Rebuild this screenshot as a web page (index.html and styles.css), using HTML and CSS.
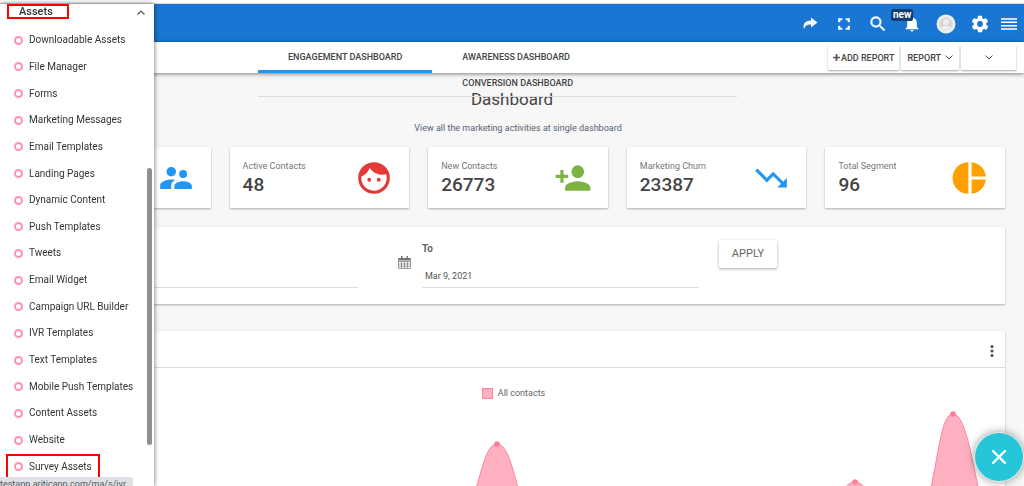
FILE: index.html
```html
<!DOCTYPE html>
<html lang="en">
<head>
<meta charset="utf-8">
<title>Dashboard</title>
<link rel="stylesheet" href="styles.css">
</head>
<body>
<header class="topbar">
  <button class="icon-btn" aria-label="Share"><svg width="16" height="16" viewBox="0 0 16 16"><path d="M9 1.500L15.500 6.500 9 11.500V8.600C5.500 8.300 3 9.500 2.200 13 .2 8.500 3 4.500 9 4.500z" fill="#fff"/></svg></button>
  <button class="icon-btn" aria-label="Full screen"><svg width="20" height="20" viewBox="0 0 24 24"><path d="M5 5h5v2.500H7.500V10H5zm9 0h5v5h-2.500V7.500H14zM5 14h2.500v2.500H10V19H5zm11.500 0H19v5h-5v-2.500h2.500z" fill="#fff"/></svg></button>
  <button class="icon-btn" aria-label="Search"><svg width="20" height="20" viewBox="0 0 24 24"><path d="M15.500 14h-.8l-.3-.3A6.500 6.500 0 1 0 13.700 14.400l.3.300v.8l5 5 1.500-1.500zm-6 0a4.500 4.500 0 1 1 0-9 4.500 4.500 0 0 1 0 9z" fill="#fff" stroke="#fff" stroke-width=".5"/></svg></button>
  <button class="icon-btn bell" aria-label="Notifications"><svg width="18" height="18" viewBox="0 0 24 24"><path d="M12 22c1.100 0 2-.9 2-2h-4c0 1.100.9 2 2 2zm6.500-6v-5.500c0-3.300-2.100-6-5-6.700V3a1.500 1.500 0 0 0-3 0v.8c-2.900.7-5 3.400-5 6.700V16l-2 2v1h17v-1z" fill="#fff"/></svg><span class="badge">new</span></button>
  <button class="icon-btn" aria-label="Profile"><svg width="20" height="20" viewBox="0 0 20 20"><circle cx="10" cy="10" r="9.500" fill="#eee"/><circle cx="10" cy="10" r="6.500" fill="#d6d6d6"/><circle cx="10" cy="8" r="3" fill="#eee"/><path d="M5 14c1-3 9-3 10 0-2 3-8 3-10 0z" fill="#eee"/></svg></button>
  <button class="icon-btn" aria-label="Settings"><svg width="20" height="20" viewBox="0 0 24 24"><path d="M19.400 13c0-.3.100-.6.100-1s0-.7-.1-1l2.100-1.600c.2-.2.200-.4.100-.6l-2-3.500c-.1-.2-.4-.3-.6-.2l-2.500 1c-.5-.4-1.100-.7-1.700-1l-.4-2.600c0-.3-.2-.5-.4-.5h-4c-.2 0-.4.200-.5.400l-.4 2.700c-.6.200-1.100.6-1.700 1l-2.500-1c-.2-.1-.5 0-.6.200l-2 3.500c-.1.200 0 .5.100.6L4.600 11c0 .3-.1.600-.1 1s0 .7.100 1l-2.100 1.600c-.2.200-.2.400-.1.600l2 3.500c.1.200.4.300.6.200l2.500-1c.5.400 1.100.7 1.700 1l.4 2.600c0 .3.200.5.500.5h4c.2 0 .4-.2.500-.4l.4-2.700c.6-.2 1.100-.6 1.700-1l2.500 1c.2.100.5 0 .6-.2l2-3.500c.1-.2 0-.5-.1-.6zM12 15.500a3.500 3.500 0 1 1 0-7 3.500 3.500 0 0 1 0 7z" fill="#fff"/></svg></button>
  <button class="icon-btn" aria-label="Menu"><svg width="16" height="12" viewBox="0 0 16 12"><path d="M0 1h16M0 4.300h16M0 7.700h16M0 11h16" stroke="#fff" stroke-width="1.400"/></svg></button>
</header>

<div class="subbar">
  <nav class="tabs">
    <a class="tab active" href="#engagement">ENGAGEMENT DASHBOARD</a>
    <a class="tab" href="#awareness">AWARENESS DASHBOARD</a>
    <a class="tab wrapped" href="#conversion">CONVERSION DASHBOARD</a>
  </nav>
  <div class="actions">
    <button class="action"><svg width="7" height="7" viewBox="0 0 7 7"><path d="M3.500 0v7M0 3.500h7" stroke="#555" stroke-width="1.700"/></svg>ADD REPORT</button>
    <button class="action report">REPORT<svg width="8" height="5" viewBox="0 0 8 5"><path d="M.5.500L4 4 7.500.500" fill="none" stroke="#555"/></svg></button>
    <button class="action more" aria-label="More"><svg width="8" height="5" viewBox="0 0 8 5"><path d="M.5.500L4 4 7.500.500" fill="none" stroke="#555"/></svg></button>
  </div>
</div>

<main class="content">
  <h1 class="title">Dashboard</h1>
  <p class="subtitle">View all the marketing activities at single dashboard</p>

  <section class="stats">
    <article class="card stat">
      <div></div>
      <svg width="38" height="38" viewBox="0 0 24 24"><path d="M16.500 12a2.500 2.500 0 1 0 0-5 2.500 2.500 0 0 0 0 5zM9 11a3 3 0 1 0 0-6 3 3 0 0 0 0 6zm7.500 3c-1.800 0-5.500.9-5.500 2.800V19h11v-2.200c0-1.900-3.700-2.800-5.500-2.800zM9 13c-2.300 0-7 1.200-7 3.500V19h7v-2.200c0-.9.300-2.400 2.400-3.500-.9-.2-1.700-.3-2.400-.3z" fill="#2196f3"/></svg>
    </article>
    <article class="card stat">
      <div><h2 class="label">Active Contacts</h2><p class="value">48</p></div>
      <svg width="38" height="38" viewBox="0 0 24 24"><path d="M9 11.800a1.200 1.200 0 1 0 0 2.500 1.200 1.200 0 0 0 0-2.500zm6 0a1.200 1.200 0 1 0 0 2.500 1.200 1.200 0 0 0 0-2.500zM12 2a10 10 0 1 0 0 20 10 10 0 0 0 0-20zm0 18a8 8 0 0 1-8-8.900 10.100 10.100 0 0 0 5.300-5.400A10 10 0 0 0 17.500 10c.8 0 1.500-.1 2.200-.3.200.7.300 1.500.3 2.300a8 8 0 0 1-8 8z" fill="#e53935"/></svg>
    </article>
    <article class="card stat">
      <div><h2 class="label">New Contacts</h2><p class="value">26773</p></div>
      <svg width="38" height="38" viewBox="0 0 24 24"><path d="M15 12a4 4 0 1 0 0-8 4 4 0 0 0 0 8zm-9-2V7H4v3H1v2h3v3h2v-3h3v-2zm9 4c-2.700 0-8 1.300-8 4v2h16v-2c0-2.700-5.300-4-8-4z" fill="#7cb342"/></svg>
    </article>
    <article class="card stat">
      <div><h2 class="label">Marketing Churn</h2><p class="value">23387</p></div>
      <svg width="38" height="38" viewBox="0 0 24 24"><path d="M16 18l2.300-2.300-4.900-4.900-4 4L2 7.400 3.400 6l6 6 4-4 6.300 6.300L22 12v6z" fill="#2196f3"/></svg>
    </article>
    <article class="card stat">
      <div><h2 class="label">Total Segment</h2><p class="value">96</p></div>
      <svg width="38" height="38" viewBox="0 0 24 24"><path d="M11 2v20a10 10 0 0 1 0-20zm2 0v9h9a10 10 0 0 0-9-9zm0 11v9a10 10 0 0 0 9-9z" fill="#ffa000"/></svg>
    </article>
  </section>

  <form class="card filter">
    <div class="date"></div>
    <svg class="calendar" width="13" height="13" viewBox="0 0 13 13"><path d="M.5 2.500h12v10H.5zM.5 5.500h12M3.500 5.500v7M6.500 5.500v7M9.500 5.500v7M.5 8h12M.5 10.300h12" fill="none" stroke="#777" stroke-width=".7"/><path d="M.5 2h12v2.500H.5zM3 0h1.500v3H3zM8.500 0H10v3H8.500z" fill="#777"/></svg>
    <div class="date"><label for="to">To</label><input id="to" type="text" value="Mar 9, 2021"></div>
    <button class="apply" type="button">APPLY</button>
  </form>

  <section class="card chart">
    <div class="chart-head"><button class="dots" aria-label="Chart options"><svg width="4" height="14" viewBox="0 0 4 14"><g fill="#555"><circle cx="2" cy="2.500" r="1.600"/><circle cx="2" cy="7" r="1.600"/><circle cx="2" cy="11.500" r="1.600"/></g></svg></button></div>
    <p class="legend"><span class="swatch"></span>All contacts</p>
    <svg class="plot" viewBox="0 0 974 90" role="img" aria-label="All contacts">
      <g fill="#ffb1c1" stroke="#ff84a0">
        <path d="M443 96C452 65 456 44 466 44S482 68 489 96z"/>
        <path d="M808 96C813 88 818 82 824 82S835 88 840 96z"/>
        <path d="M898 96C908 55 910 14 922 14S940 55 949 96z"/>
      </g>
      <g fill="#ff7f9b"><circle cx="466" cy="44" r="2.800"/><circle cx="824" cy="82" r="2.800"/><circle cx="922" cy="14" r="2.800"/></g>
    </svg>
  </section>
</main>

<aside class="drawer">
  <button class="group"><span class="group-name">Assets</span><svg width="8" height="5" viewBox="0 0 8 5"><path d="M.5 4.500L4 1l3.500 3.500" fill="none" stroke="#555" stroke-width="1.200"/></svg></button>
  <ul class="menu">
    <li><a href="#">Downloadable Assets</a></li>
    <li><a href="#">File Manager</a></li>
    <li><a href="#">Forms</a></li>
    <li><a href="#">Marketing Messages</a></li>
    <li><a href="#">Email Templates</a></li>
    <li><a href="#">Landing Pages</a></li>
    <li><a href="#">Dynamic Content</a></li>
    <li><a href="#">Push Templates</a></li>
    <li><a href="#">Tweets</a></li>
    <li><a href="#">Email Widget</a></li>
    <li><a href="#">Campaign URL Builder</a></li>
    <li><a href="#">IVR Templates</a></li>
    <li><a href="#">Text Templates</a></li>
    <li><a href="#">Mobile Push Templates</a></li>
    <li><a href="#">Content Assets</a></li>
    <li><a href="#">Website</a></li>
    <li><a class="marked" href="#">Survey Assets</a></li>
  </ul>
  <div class="thumb"></div>
</aside>
<div class="status">testapp.ariticapp.com/ma/s/ivr</div>
<button class="fab" aria-label="Close"><svg width="16" height="16" viewBox="0 0 16 16"><path d="M2 2l12 12M14 2L2 14" stroke="#fff" stroke-width="2.400" stroke-linecap="round"/></svg></button>
</body>
</html>
```
FILE: styles.css
```css
*, *::before { box-sizing: border-box; }
html { height: 100%; overflow: hidden; }
body {
  height: 100%; margin: 0; overflow: hidden;
  display: flex; flex-direction: column;
  border-top: 3px solid #fff;
  background: #f7f7f7; color: #444;
  font: 9px/14px Roboto, sans-serif;
}
h1, h2, p, ul { margin: 0; padding: 0; font-weight: 400; }
button { margin: 0; padding: 0; border: 0; background: none; color: inherit; font: inherit; }
a { color: inherit; text-decoration: none; }
svg { display: block; flex: none; }

.topbar {
  flex: none; height: 39px; padding: 1px 6px 0 0;
  display: flex; justify-content: flex-end; align-items: center; gap: 6px;
  border-top: 1px solid #d5dbe2; background: #1976d2;
}
.icon-btn { display: flex; justify-content: center; min-width: 28px; }
.icon-btn:last-child { min-width: 18px; }
.bell { position: relative; }
.badge {
  position: absolute; left: -7px; top: -6px;
  padding: 0 2px; border-radius: 2px;
  background: #123f6e; color: #fff; font-size: 10px; font-weight: 700; line-height: 12px;
}

.subbar {
  position: relative; flex: none; height: 31px; padding-left: 258px;
  display: flex; justify-content: space-between;
  background: #fff; box-shadow: 0 1px 4px rgba(0,0,0,.5);
}
.tabs {
  width: 479px; height: 55px;
  display: grid; grid-template-columns: auto 1fr; grid-template-rows: 31px 23px;
  border-bottom: 1px solid #ddd;
  font-weight: 500;
}
.tab { padding: 0 30px; line-height: 31px; }
.active { border-bottom: 3px solid #2196f3; }
.wrapped { grid-column: 2; line-height: 21px; }
.actions { display: flex; gap: 2px; padding: 3px 8px 3px 0; }
.action {
  display: flex; align-items: center; justify-content: center; gap: 1px;
  padding: 0 5px; border-radius: 1px; background: #fff;
  box-shadow: 0 1px 2px rgba(0,0,0,.35);
  font-weight: 500;
}
.report { gap: 4px; padding: 0 6px; }
.more { width: 55px; }

.content { flex: 1; min-height: 0; padding: 15px 19px 0 31px; }
.title { margin-right: 12px; font-size: 17px; line-height: 22px; text-align: center; }
.subtitle { margin: 11px 0 12px; color: #566270; text-align: center; }

.card { background: #fff; box-shadow: 0 1px 2px rgba(0,0,0,.3); }
.stats { display: grid; grid-template-columns: repeat(5, 1fr); gap: 19px; }
.stat { height: 61px; padding: 0 16px 0 13px; display: flex; justify-content: space-between; align-items: center; }
.label { color: #777; font-size: 9px; line-height: 14px; }
.value { font-size: 19px; font-weight: 500; line-height: 23px; }

.filter {
  margin-top: 19px; height: 77px; padding: 13px 0 0 50px;
  display: grid; grid-template-columns: 277fr 64px 277fr 20px 286fr;
  align-items: start;
}
.calendar { margin: 16px 0 0 28px; justify-self: center; }
.date { height: 48px; display: flex; flex-direction: column; border-bottom: 1px solid #ddd; }
.date label { line-height: 18px; font-size: 10px; font-weight: 700; color: #666; }
.date input { padding: 0 3px; margin-top: 11px; border: 0; outline: 0; background: none; color: #555; font: inherit; }
.apply {
  grid-column: 5; justify-self: start; width: 58px; height: 28px;
  border-radius: 2px; box-shadow: 0 1px 3px rgba(0,0,0,.35);
  color: #666; font-size: 11px;
}

.chart { margin-top: 27px; }
.chart-head { height: 37px; padding: 3px 11px 0; display: flex; align-items: center; justify-content: flex-end; border-bottom: 1px solid #ddd; }
.legend { margin-top: 18px; display: flex; align-items: center; justify-content: center; gap: 5px; padding-right: 9px; color: #666; }
.swatch { width: 11px; height: 11px; border: 1px solid #ff84a0; background: #ffb1c1; }
.plot { width: 100%; }

.drawer {
  position: fixed; left: 0; top: 4px; bottom: 0; width: 154px;
  padding-bottom: 6px; display: flex; flex-direction: column;
  background: #fff; box-shadow: 0 0 5px rgba(0,0,0,.6);
  color: #333; font-size: 10px;
}
.group { display: flex; justify-content: space-between; align-items: center; height: 23px; padding: 0 9px 8px 7px; }
.group svg { margin-top: 2px; }
.group-name { width: 62px; padding-left: 10px; border: 2px solid #f00; font-size: 11px; font-weight: 500; line-height: 11px; text-align: left; }
.menu { flex: 1; display: grid; grid-auto-rows: 1fr; list-style: none; }
.menu li { display: flex; align-items: center; padding-left: 6px; }
.menu a { display: flex; align-items: center; gap: 6px; padding: 4px 6px; border: 2px solid transparent; line-height: 14px; }
.menu a::before { content: ""; width: 9px; height: 9px; border: 2px solid #ff93ab; border-radius: 50%; }
.menu .marked { border-color: #f00; }
.thumb { position: absolute; right: 2px; top: 164px; bottom: 41px; width: 5px; border-radius: 3px; background: #8f8f8f; }
.status {
  position: fixed; left: 0; bottom: 0; width: 133px; height: 9px; overflow: hidden;
  border-radius: 0 3px 0 0; background: #dee1e6; color: #555; line-height: 14px; white-space: nowrap;
}
.fab {
  position: fixed; right: 1px; bottom: 5px; width: 48px; height: 48px;
  display: flex; align-items: center; justify-content: center;
  border-radius: 50%; background: #26c6da; box-shadow: 0 0 0 1px rgba(255,255,255,.6), 0 0 10px rgba(0,0,0,.5);
}
```
